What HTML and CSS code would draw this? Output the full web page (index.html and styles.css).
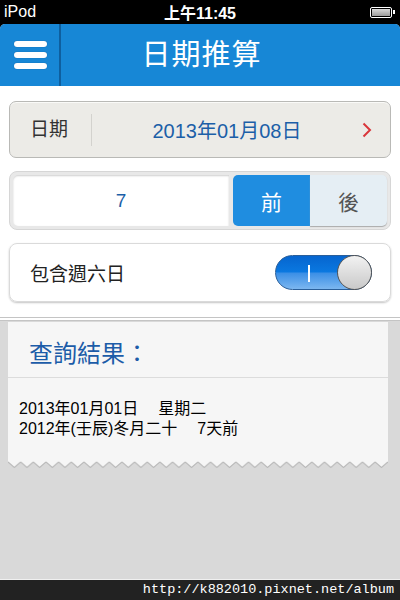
FILE: index.html
```html
<!DOCTYPE html>
<html lang="zh-Hant">
<head>
<meta charset="UTF-8" />
<meta name="viewport" content="width=device-width, initial-scale=1" />
<title>日期推算</title>
<link rel="stylesheet" href="styles.css">
</head>
<body>

<div class="statusbar">
  <span class="carrier">iPod</span>
  <span class="clock">上午11:45</span>
  <span class="battery"><span class="battery-level"></span></span>
</div>

<div class="app">
  <header class="topbar">
    <button class="menu-btn" aria-label="選單">
      <span></span><span></span><span></span>
    </button>
    <h1>日期推算</h1>
  </header>

  <main class="form">
    <div class="date-row">
      <span class="date-label">日期</span>
      <span class="date-value">2013年01月08日</span>
      <svg class="chevron" width="10" height="16" viewBox="0 0 10 16">
        <polyline points="1.5,1.5 8,8 1.5,14.5" fill="none" stroke="#d9363b" stroke-width="2" />
      </svg>
    </div>

    <div class="days-row">
      <div class="days-input">7</div>
      <button class="seg seg-active">前</button>
      <button class="seg">後</button>
    </div>

    <div class="toggle-card">
      <span>包含週六日</span>
      <div class="switch">
        <span class="switch-mark"></span>
        <span class="switch-knob"></span>
      </div>
    </div>
  </main>

  <section class="results">
    <div class="receipt">
      <h2>查詢結果：</h2>
      <div class="receipt-body">
        <p>2013年01月01日<span class="gap"></span>星期二</p>
        <p>2012年(壬辰)冬月二十<span class="gap"></span>7天前</p>
      </div>
      <svg class="zigzag" width="380" height="8" viewBox="0 0 380 8" preserveAspectRatio="none">
        <defs>
          <pattern id="teeth" width="12.66" height="8" patternUnits="userSpaceOnUse">
            <path d="M0 0 L12.66 0 L12.66 1 L6.33 6.5 L0 1 Z" fill="#f6f6f6" />
            <polyline points="0,1 6.33,6.5 12.66,1" fill="none" stroke="#b9b9b9" stroke-width="1" />
          </pattern>
        </defs>
        <rect width="380" height="8" fill="url(#teeth)" />
      </svg>
    </div>
  </section>

  <footer class="watermark">http://k882010.pixnet.net/album</footer>
</div>

</body>
</html>
```

FILE: styles.css
```css
* {
  box-sizing: border-box;
}

body {
  margin: 0;
  width: 400px;
  height: 600px;
  overflow: hidden;
  background: #000;
  font-family: "Liberation Sans", "Noto Sans CJK TC", sans-serif;
  display: flex;
  flex-direction: column;
}

/* Status bar */
.statusbar {
  height: 24px;
  flex: none;
  display: flex;
  align-items: center;
  justify-content: space-between;
  padding: 0 7px 0 4px;
  color: #fff;
  font-size: 16px;
  position: relative;
}

.clock {
  position: absolute;
  left: 0;
  right: 0;
  text-align: center;
  font-weight: bold;
  font-size: 16px;
}

.battery {
  width: 22px;
  height: 11px;
  border: 1.5px solid #fff;
  border-radius: 2px;
  padding: 1px;
  position: relative;
  margin-right: 1px;
}

.battery::after {
  content: "";
  position: absolute;
  right: -4px;
  top: 2px;
  width: 2px;
  height: 4px;
  background: #fff;
}

.battery-level {
  display: block;
  height: 100%;
  background: linear-gradient(#d8d8d8, #9a9a9a);
}

.app {
  flex: 1;
  display: flex;
  flex-direction: column;
  background: #d9d9d9;
  border-radius: 5px 5px 0 0;
  overflow: hidden;
}

/* Header */
.topbar {
  height: 62px;
  flex: none;
  background: #1787d6;
  display: flex;
  align-items: stretch;
}

.menu-btn {
  width: 61px;
  border: none;
  border-right: 2px solid #0e5f9f;
  background: transparent;
  display: flex;
  flex-direction: column;
  justify-content: center;
  gap: 5px;
  padding: 0 12px 0 14px;
}

.menu-btn span {
  display: block;
  height: 6px;
  border-radius: 3px;
  background: #fff;
  box-shadow: 0 0 1px #0a4f88;
}

.topbar h1 {
  flex: 1;
  margin: 0;
  padding-right: 58px;
  color: #fff;
  font-weight: normal;
  font-size: 29px;
  letter-spacing: 1px;
  text-align: center;
  line-height: 62px;
}

/* Form */
.form {
  flex: none;
  background: #fff;
  padding: 15px 9px 15px;
  display: flex;
  flex-direction: column;
  gap: 13px;
  border-bottom: 4px double #c4c4c4;
}

.date-row {
  height: 57px;
  display: flex;
  align-items: center;
  background: #ecebe7;
  border: 1.5px solid #b9b9b6;
  border-radius: 7px;
  box-shadow: inset 0 1px 0 #fafaf8;
  padding: 0 18px 0 20px;
}

.date-label {
  width: 62px;
  font-size: 19px;
  color: #333;
  line-height: 32px;
  border-right: 1px solid #d3d2ce;
}

.date-value {
  flex: 1;
  text-align: center;
  color: #1c5fa8;
  font-size: 20px;
}

.days-row {
  height: 59px;
  display: flex;
  padding: 3px;
  background: #e8e8e8;
  border: 1px solid #d6d6d6;
  border-radius: 8px;
}

.days-input {
  width: 216px;
  background: #fff;
  border-radius: 5px 0 0 5px;
  box-shadow: inset 0 1px 2px #cfcfcf;
  display: flex;
  align-items: center;
  justify-content: center;
  color: #1c5fa8;
  font-size: 19px;
  margin-right: 4px;
}

.seg {
  flex: 1;
  border: none;
  font-family: inherit;
  font-size: 21px;
  color: #555;
  background: #e5eef4;
  border-radius: 0 5px 5px 0;
  box-shadow: 0 1px 1px #aaa;
}

.seg-active {
  background: #1f8de0;
  color: #fff;
  border-radius: 5px 0 0 5px;
  box-shadow: none;
}

.toggle-card {
  height: 59px;
  display: flex;
  align-items: center;
  justify-content: space-between;
  padding: 0 18px 0 20px;
  border: 1px solid #dadada;
  border-radius: 8px;
  box-shadow: 0 1px 2px #c4c4c4;
  font-size: 19px;
  color: #222;
}

.switch {
  width: 97px;
  height: 35px;
  border-radius: 18px;
  border: 1px solid #2a5f9a;
  background: linear-gradient(#0665cf 0%, #0a78e0 48%, #3b8fe6 52%, #7cb7f0 100%);
  position: relative;
}

.switch-mark {
  position: absolute;
  left: 32px;
  top: 9px;
  width: 2px;
  height: 17px;
  background: #fff;
}

.switch-knob {
  position: absolute;
  right: -1px;
  top: -1px;
  width: 35px;
  height: 35px;
  border-radius: 50%;
  border: 1px solid #555;
  background: linear-gradient(#f2f2f2, #c9c9c9);
}

/* Results */
.results {
  flex: 1;
  padding: 1px 12px 0 8px;
}

.receipt {
  background: #f6f6f6;
  position: relative;
  padding-bottom: 8px;
}

.receipt h2 {
  margin: 0;
  padding: 12px 21px 8px;
  font-weight: normal;
  font-size: 24px;
  color: #1c5ca8;
  border-bottom: 1px solid #dcdcdc;
}

.receipt-body {
  padding: 21px 11px 22px;
}

.receipt-body p {
  margin: 0;
  font-size: 16px;
  line-height: 20px;
  color: #000;
}

.gap {
  display: inline-block;
  width: 20px;
}

.zigzag {
  position: absolute;
  left: 0;
  bottom: 0;
  display: block;
  background: #d9d9d9;
}

.watermark {
  height: 21px;
  flex: none;
  background: #222;
  border-top: 1px solid #f0f0f0;
  color: #fff;
  font-family: "Liberation Mono", monospace;
  font-size: 13.5px;
  text-align: right;
  padding-right: 6px;
  line-height: 20px;
}
```
